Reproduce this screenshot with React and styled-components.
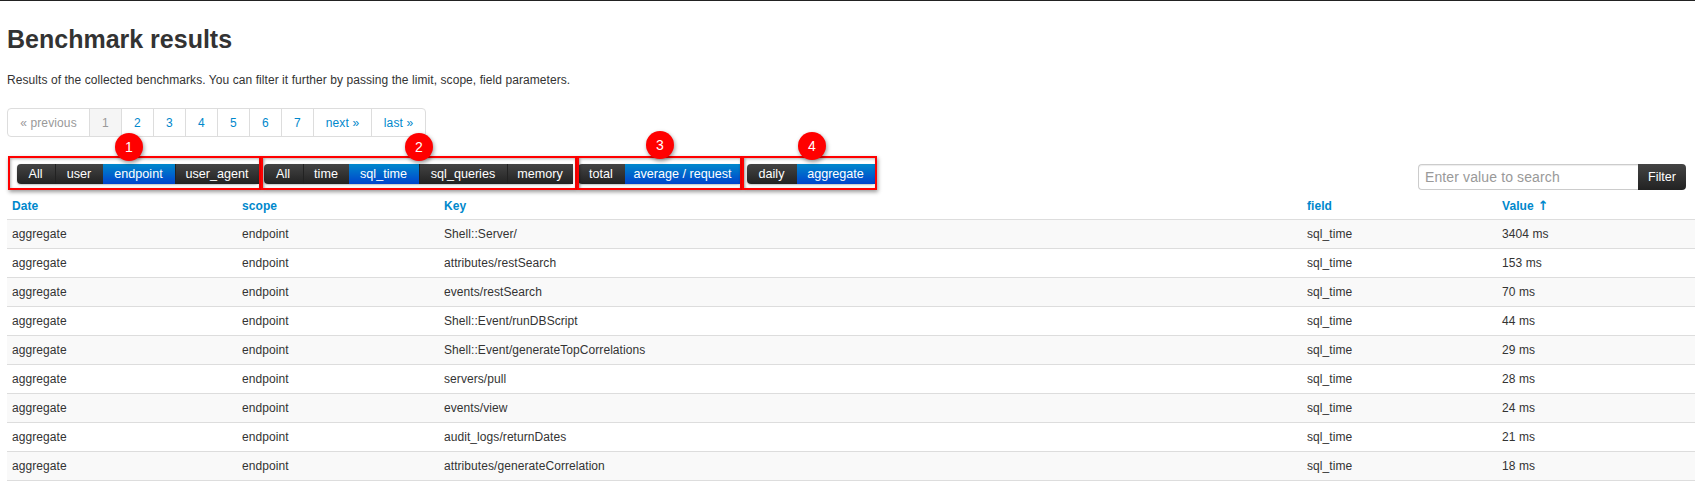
import React from "react";
import styled, { createGlobalStyle } from "styled-components";

const GlobalStyle = createGlobalStyle`
  html, body {
    margin: 0;
    background: #fff;
    overflow: hidden;
  }
  body {
    font-family: "Liberation Sans", Arial, sans-serif;
    font-size: 12px;
    line-height: 18px;
    letter-spacing: 0.07px;
    color: #333;
  }
`;

const Page = styled.div`
  border-top: 1px solid #222;
  padding: 20px 0 0 7px;
`;

const Title = styled.h2`
  margin: 0;
  font-size: 25px;
  line-height: 36px;
  font-weight: bold;
  letter-spacing: 0;
  color: #333;
`;

const Intro = styled.p`
  margin: 14px 0 0;
  font-size: 12px;
  line-height: 18px;
`;

const Pagination = styled.div`
  display: inline-flex;
  margin-top: 19px;
  height: 29px;
  border: 1px solid #ddd;
  border-radius: 4px;
  box-sizing: border-box;
  vertical-align: top;
`;

const PageLink = styled.a`
  display: flex;
  align-items: center;
  justify-content: center;
  box-sizing: border-box;
  width: ${(p) => p.$w}px;
  font-size: 12px;
  letter-spacing: 0.12px;
  color: ${(p) => (p.$off ? "#999" : "#0088cc")};
  background: ${(p) => (p.$current ? "#f5f5f5" : "transparent")};
  border-left: ${(p) => (p.$first ? "none" : "1px solid #ddd")};
`;

const Toolbar = styled.div`
  display: flex;
  align-items: flex-start;
  height: 56px;
  padding: 27px 0 0 10px;
  box-sizing: border-box;
`;

const Group = styled.div`
  position: relative;
  display: flex;
  height: 20px;
  margin-right: ${(p) => p.$gap}px;
  border-radius: 4px;
  box-shadow: 0 1px 2px rgba(0, 0, 0, 0.25);
`;

const Marker = styled.div`
  position: absolute;
  top: -8px;
  bottom: -6px;
  left: ${(p) => p.$left}px;
  right: ${(p) => p.$right}px;
  border: 2px solid #f00;
  box-sizing: border-box;
  box-shadow: 1px 2px 4px rgba(0, 0, 0, 0.4), inset 1px 1px 3px rgba(0, 0, 0, 0.3);
  pointer-events: none;
`;

const Badge = styled.div`
  position: absolute;
  top: ${(p) => p.$top}px;
  left: ${(p) => p.$left}px;
  width: 28px;
  height: 28px;
  border-radius: 50%;
  background: #f00;
  color: #fff;
  font-size: 14px;
  line-height: 28px;
  text-align: center;
  box-shadow: 1px 2px 4px rgba(0, 0, 0, 0.4);
`;

const Segment = styled.span`
  display: flex;
  align-items: center;
  justify-content: center;
  box-sizing: border-box;
  width: ${(p) => p.$w}px;
  padding-right: 1px;
  font-size: 12.6px;
  letter-spacing: 0;
  color: #fff;
  background: ${(p) =>
    p.$active
      ? "linear-gradient(to bottom, #0088cc, #0044cc)"
      : "linear-gradient(to bottom, #444, #222)"};
  border-left: ${(p) => (p.$first || p.$active ? "none" : "1px solid #222")};
  &:first-child {
    border-radius: 4px 0 0 4px;
  }
  &:last-child {
    border-radius: 0 4px 4px 0;
  }
`;

const Search = styled.div`
  display: flex;
  height: 26px;
  margin-left: auto;
  margin-right: 9px;
`;

const SearchInput = styled.div`
  box-sizing: border-box;
  width: 220px;
  padding-left: 6px;
  border: 1px solid #ccc;
  border-right: none;
  border-radius: 4px 0 0 4px;
  font-size: 14px;
  letter-spacing: 0.12px;
  line-height: 24px;
  color: #999;
  box-shadow: inset 0 1px 1px rgba(0, 0, 0, 0.075);
`;

const FilterButton = styled.div`
  width: 48px;
  font-size: 12.6px;
  letter-spacing: 0;
  line-height: 26px;
  text-align: center;
  color: #fff;
  border-radius: 0 4px 4px 0;
  background: linear-gradient(to bottom, #444, #222);
`;

const Table = styled.table`
  width: 1688px;
  border-collapse: collapse;
  table-layout: fixed;
  font-size: 12px;
`;

const HeadCell = styled.th`
  height: 26px;
  padding: 0 5px;
  box-sizing: border-box;
  text-align: left;
  font-weight: bold;
  color: #0088cc;
  border-bottom: 1px solid #ddd;
`;

const SortArrow = styled.span`
  font-family: "DejaVu Sans", sans-serif;
  font-size: 13px;
  margin-left: 4px;
`;

const Row = styled.tr`
  background: ${(p) => (p.$odd ? "#f9f9f9" : "#fff")};
`;

const Cell = styled.td`
  height: 29px;
  padding: 0 5px;
  box-sizing: border-box;
  border-bottom: 1px solid #ddd;
`;

const pages = [
  { label: "« previous", w: 81, off: true, first: true },
  { label: "1", w: 32, off: true, current: true },
  { label: "2", w: 32 },
  { label: "3", w: 32 },
  { label: "4", w: 32 },
  { label: "5", w: 32 },
  { label: "6", w: 32 },
  { label: "7", w: 32 },
  { label: "next »", w: 58 },
  { label: "last »", w: 54 },
];

const groups = [
  {
    gap: 5,
    marker: { left: -9, right: -2 },
    badge: { left: 98, top: -31 },
    num: 1,
    items: [
      { label: "All", w: 38 },
      { label: "user", w: 48 },
      { label: "endpoint", w: 72, active: true },
      { label: "user_agent", w: 84 },
    ],
  },
  {
    gap: 5,
    marker: { left: -3, right: -4 },
    badge: { left: 141, top: -31 },
    num: 2,
    items: [
      { label: "All", w: 39 },
      { label: "time", w: 46 },
      { label: "sql_time", w: 70, active: true },
      { label: "sql_queries", w: 88 },
      { label: "memory", w: 66 },
    ],
  },
  {
    gap: 6,
    marker: { left: -1, right: -1 },
    badge: { left: 68, top: -33 },
    num: 3,
    items: [
      { label: "total", w: 47 },
      { label: "average / request", w: 116, active: true },
    ],
  },
  {
    gap: 0,
    marker: { left: -5, right: -2 },
    badge: { left: 51, top: -32 },
    num: 4,
    items: [
      { label: "daily", w: 50 },
      { label: "aggregate", w: 78, active: true },
    ],
  },
];

const rows = [
  ["Shell::Server/", "3404 ms"],
  ["attributes/restSearch", "153 ms"],
  ["events/restSearch", "70 ms"],
  ["Shell::Event/runDBScript", "44 ms"],
  ["Shell::Event/generateTopCorrelations", "29 ms"],
  ["servers/pull", "28 ms"],
  ["events/view", "24 ms"],
  ["audit_logs/returnDates", "21 ms"],
  ["attributes/generateCorrelation", "18 ms"],
];

const App = () => {
  return (
    <Page>
      <GlobalStyle />
      <Title>Benchmark results</Title>
      <Intro>
        Results of the collected benchmarks. You can filter it further by passing the limit, scope,
        field parameters.
      </Intro>
      <Pagination>
        {pages.map((p) => (
          <PageLink key={p.label} $w={p.w} $off={p.off} $current={p.current} $first={p.first}>
            {p.label}
          </PageLink>
        ))}
      </Pagination>
      <Toolbar>
        {groups.map((g) => (
          <Group key={g.num} $gap={g.gap}>
            {g.items.map((item, i) => (
              <Segment key={item.label} $w={item.w} $active={item.active} $first={i === 0}>
                {item.label}
              </Segment>
            ))}
            <Marker $left={g.marker.left} $right={g.marker.right} />
            <Badge $left={g.badge.left} $top={g.badge.top}>
              {g.num}
            </Badge>
          </Group>
        ))}
        <Search>
          <SearchInput>Enter value to search</SearchInput>
          <FilterButton>Filter</FilterButton>
        </Search>
      </Toolbar>
      <Table>
        <colgroup>
          <col style={{ width: 230 }} />
          <col style={{ width: 202 }} />
          <col style={{ width: 863 }} />
          <col style={{ width: 195 }} />
          <col />
        </colgroup>
        <thead>
          <tr>
            <HeadCell>Date</HeadCell>
            <HeadCell>scope</HeadCell>
            <HeadCell>Key</HeadCell>
            <HeadCell>field</HeadCell>
            <HeadCell>
              Value<SortArrow>↑</SortArrow>
            </HeadCell>
          </tr>
        </thead>
        <tbody>
          {rows.map(([key, value], i) => (
            <Row key={key} $odd={i % 2 === 0}>
              <Cell>aggregate</Cell>
              <Cell>endpoint</Cell>
              <Cell>{key}</Cell>
              <Cell>sql_time</Cell>
              <Cell>{value}</Cell>
            </Row>
          ))}
        </tbody>
      </Table>
    </Page>
  );
};

export default App;
